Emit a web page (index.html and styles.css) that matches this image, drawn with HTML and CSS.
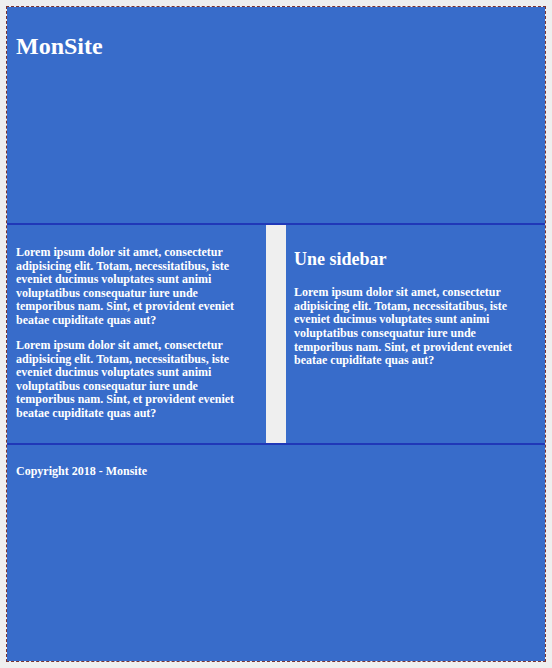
FILE: index.html
```html
<!DOCTYPE html>
<html lang="fr">
<head>
<meta charset="utf-8">
<title>MonSite</title>
<link rel="stylesheet" href="styles.css">
</head>
<body>
<div class="wrapper">
  <header class="header">
    <h1>MonSite</h1>
  </header>
  <main class="content">
    <p>Lorem ipsum dolor sit amet, consectetur adipisicing elit. Totam, necessitatibus, iste eveniet ducimus voluptates sunt animi voluptatibus consequatur iure unde temporibus nam. Sint, et provident eveniet beatae cupiditate quas aut?</p>
    <p>Lorem ipsum dolor sit amet, consectetur adipisicing elit. Totam, necessitatibus, iste eveniet ducimus voluptates sunt animi voluptatibus consequatur iure unde temporibus nam. Sint, et provident eveniet beatae cupiditate quas aut?</p>
  </main>
  <aside class="sidebar">
    <h2>Une sidebar</h2>
    <p>Lorem ipsum dolor sit amet, consectetur adipisicing elit. Totam, necessitatibus, iste eveniet ducimus voluptates sunt animi voluptatibus consequatur iure unde temporibus nam. Sint, et provident eveniet beatae cupiditate quas aut?</p>
  </aside>
  <footer class="footer">
    <p>Copyright 2018 - Monsite</p>
  </footer>
</div>
</body>
</html>
```
FILE: styles.css
```css
html, body {
  height: 100%;
}
body {
  margin: 6px;
  background: #efefef;
  font-family: "Liberation Serif", "Times New Roman", serif;
  font-size: 12px;
  line-height: 1.13;
  font-weight: bold;
  color: #fff;
  box-sizing: border-box;
}
.wrapper {
  box-sizing: border-box;
  height: calc(100vh - 12px);
  border: 1px dashed #7a3434;
  display: grid;
  grid-template-columns: 1fr 20px 1fr;
  grid-template-rows: 1fr 1fr 1fr;
}
.header, .content, .sidebar, .footer {
  background: #386cca;
  padding: 8px 9px;
  box-sizing: border-box;
  min-height: 0;
}
.header {
  grid-column: 1 / 4;
  border-bottom: 2px solid #2038b8;
  padding-top: 10px;
}
.content {
  grid-column: 1;
  padding-top: 9px;
  padding-left: 9px;
}
.sidebar {
  grid-column: 3;
  padding-top: 9px;
  padding-left: 8px;
}
.footer {
  grid-column: 1 / 4;
  border-top: 2px solid #2038b8;
  padding-top: 8px;
}
h1 {
  font-size: 24px;
  margin: 16px 0;
}
h2 {
  font-size: 18px;
  margin: 15px 0 17px;
}
p {
  margin: 12px 0;
}
```
